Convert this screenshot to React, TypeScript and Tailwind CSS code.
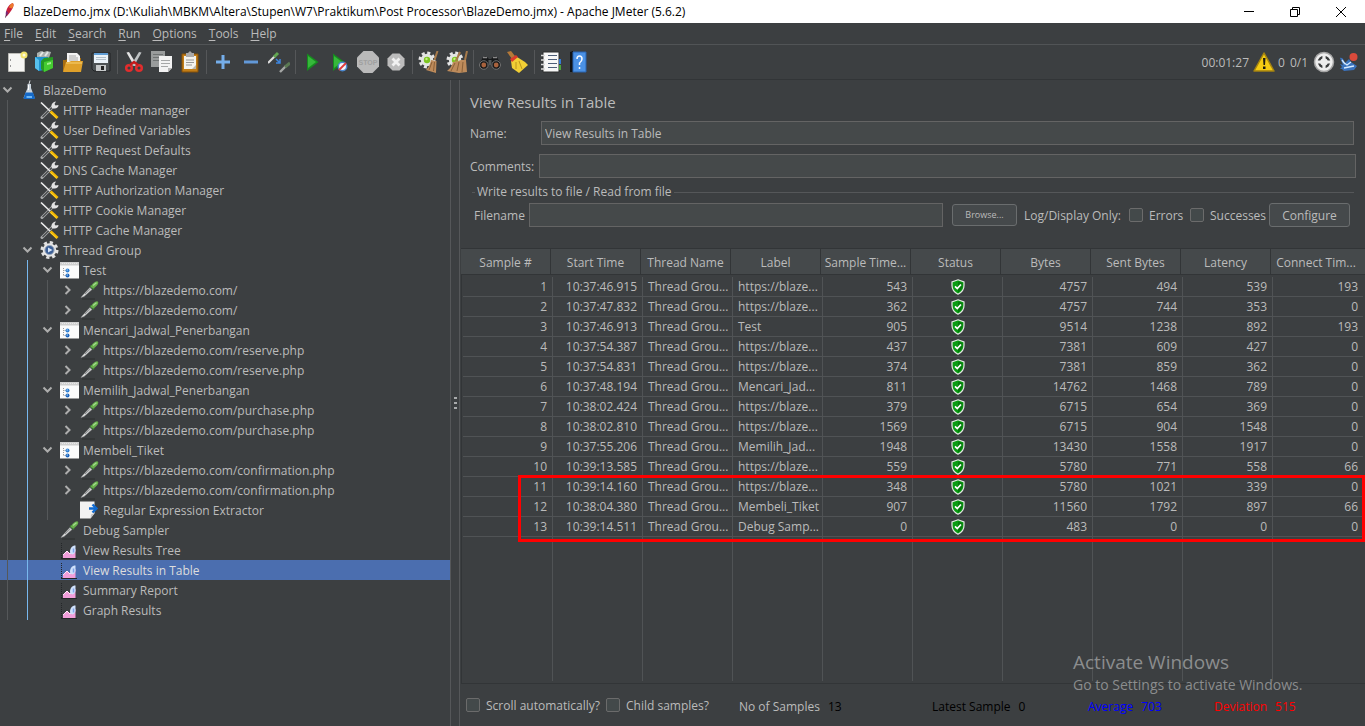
import React from "react";

type IconName =
  | "flask" | "tools" | "gear" | "controller" | "dropper" | "extractor" | "chart";

type Node = { label: string; icon: IconName; level: number; state?: "open" | "closed"; selected?: boolean };

const TREE: Node[] = [
  { label: "BlazeDemo", icon: "flask", level: 0, state: "open" },
  { label: "HTTP Header manager", icon: "tools", level: 1 },
  { label: "User Defined Variables", icon: "tools", level: 1 },
  { label: "HTTP Request Defaults", icon: "tools", level: 1 },
  { label: "DNS Cache Manager", icon: "tools", level: 1 },
  { label: "HTTP Authorization Manager", icon: "tools", level: 1 },
  { label: "HTTP Cookie Manager", icon: "tools", level: 1 },
  { label: "HTTP Cache Manager", icon: "tools", level: 1 },
  { label: "Thread Group", icon: "gear", level: 1, state: "open" },
  { label: "Test", icon: "controller", level: 2, state: "open" },
  { label: "https://blazedemo.com/", icon: "dropper", level: 3, state: "closed" },
  { label: "https://blazedemo.com/", icon: "dropper", level: 3, state: "closed" },
  { label: "Mencari_Jadwal_Penerbangan", icon: "controller", level: 2, state: "open" },
  { label: "https://blazedemo.com/reserve.php", icon: "dropper", level: 3, state: "closed" },
  { label: "https://blazedemo.com/reserve.php", icon: "dropper", level: 3, state: "closed" },
  { label: "Memilih_Jadwal_Penerbangan", icon: "controller", level: 2, state: "open" },
  { label: "https://blazedemo.com/purchase.php", icon: "dropper", level: 3, state: "closed" },
  { label: "https://blazedemo.com/purchase.php", icon: "dropper", level: 3, state: "closed" },
  { label: "Membeli_Tiket", icon: "controller", level: 2, state: "open" },
  { label: "https://blazedemo.com/confirmation.php", icon: "dropper", level: 3, state: "closed" },
  { label: "https://blazedemo.com/confirmation.php", icon: "dropper", level: 3, state: "closed" },
  { label: "Regular Expression Extractor", icon: "extractor", level: 3 },
  { label: "Debug Sampler", icon: "dropper", level: 2 },
  { label: "View Results Tree", icon: "chart", level: 2 },
  { label: "View Results in Table", icon: "chart", level: 2, selected: true },
  { label: "Summary Report", icon: "chart", level: 2 },
  { label: "Graph Results", icon: "chart", level: 2 },
];

const COLUMNS = [
  "Sample #", "Start Time", "Thread Name", "Label", "Sample Time...",
  "Status", "Bytes", "Sent Bytes", "Latency", "Connect Tim...",
];

const ROWS: [number, string, string, number, number, number, number, number][] = [
  [1, "10:37:46.915", "https://blaze...", 543, 4757, 494, 539, 193],
  [2, "10:37:47.832", "https://blaze...", 362, 4757, 744, 353, 0],
  [3, "10:37:46.913", "Test", 905, 9514, 1238, 892, 193],
  [4, "10:37:54.387", "https://blaze...", 437, 7381, 609, 427, 0],
  [5, "10:37:54.831", "https://blaze...", 374, 7381, 859, 362, 0],
  [6, "10:37:48.194", "Mencari_Jad...", 811, 14762, 1468, 789, 0],
  [7, "10:38:02.424", "https://blaze...", 379, 6715, 654, 369, 0],
  [8, "10:38:02.810", "https://blaze...", 1569, 6715, 904, 1548, 0],
  [9, "10:37:55.206", "Memilih_Jad...", 1948, 13430, 1558, 1917, 0],
  [10, "10:39:13.585", "https://blaze...", 559, 5780, 771, 558, 66],
  [11, "10:39:14.160", "https://blaze...", 348, 5780, 1021, 339, 0],
  [12, "10:38:04.380", "Membeli_Tiket", 907, 11560, 1792, 897, 66],
  [13, "10:39:14.511", "Debug Samp...", 0, 483, 0, 0, 0],
];

function Svg({ size, children }: { size: number; children: React.ReactNode }) {
  return (
    <svg width={size} height={size} viewBox={`0 0 ${size} ${size}`} className="block shrink-0" aria-hidden="true">
      {children}
    </svg>
  );
}

const TREE_ICONS: Record<IconName, React.ReactNode> = {
  flask: (
    <>
      <path d="M7.500 4h3.500v4l3.500 9.500q.3 1-.8 1H4.500q-1.200 0-.8-1L7.500 8z" fill="#c9d3dc" />
      <path d="M5.500 12.500h7.500l2 5.500q0 1-1 1H4.500q-1.200 0-.8-1z" fill="#1569c7" />
      <path d="M6.500 16h5.500v2H6.500z" fill="#6db6f5" />
      <path d="M8.500 5v5" stroke="#fff" />
      <path d="M9 4 10 0.500" stroke="#dfe3e6" />
    </>
  ),
  tools: (
    <>
      <path d="M2 17.500 13 6.500" stroke="#a9abac" strokeWidth="3" strokeLinecap="round" />
      <path d="M2.500 17 12 7.500" stroke="#45494a" strokeWidth="1.200" />
      <path d="M12 8c-1.500-3 .5-6 4-6.500L14.500 4l1 1.500 3-.5c0 3-3 4.500-6.500 3z" fill="#e4e4e4" />
      <path d="M1 2.500 10 11" stroke="#f0f0f0" strokeWidth="1.600" />
      <path d="M10.500 11.500 17.500 18" stroke="#f5b800" strokeWidth="3" />
      <path d="M10.500 12.500 16.500 18" stroke="#ffdc44" strokeWidth="0.800" />
    </>
  ),
  gear: (
    <>
      <circle cx="9.500" cy="10" r="7.600" fill="none" stroke="#e2e2e2" strokeWidth="2.800" strokeDasharray="3.200 2.770" />
      <circle cx="9.500" cy="10" r="6.800" fill="#e6e6e6" />
      <circle cx="9.500" cy="10" r="4.600" fill="#3c5f96" stroke="#9ba9bd" />
      <path d="M8 7.500 12.500 10 8 12.500z" fill="#d5e5fa" />
    </>
  ),
  controller: (
    <>
      <path d="M0 2h19v16.500H0z" fill="#fbfbfb" />
      <path d="M0 2h19v3.500H0z" fill="#cfcfcf" />
      <path d="M2 3.500h15" stroke="#e9e9e9" strokeDasharray="1 1" />
      <path d="M3.500 8v8M3.500 10.500H6M3.500 15.500H6" stroke="#999" strokeDasharray="1 1" fill="none" />
      <circle cx="7.500" cy="10.500" r="2" fill="#2f7fd3" />
      <circle cx="7.500" cy="15.500" r="2" fill="#1c64bc" />
      <path d="M6.500 10h1.500M6.500 15h1.500" stroke="#a7d3f7" />
    </>
  ),
  dropper: (
    <>
      <path d="M2 19h13" stroke="#2d3031" />
      <path d="M1 17.500 2.500 15.500 10 7.500 12 9.500 4 16.500z" fill="#dcdcdc" stroke="#8e9192" strokeWidth=".5" />
      <path d="M5 14 10.500 8.800" stroke="#75797a" strokeWidth=".8" />
      <path d="M10.300 5.500 14 9.200" stroke="#3d7a35" strokeWidth="2" />
      <path d="M10.800 7C11 5.500 14.500 1 17.300 1.300c2 .9 1 4-3.800 7.200z" fill="#68b04c" />
      <path d="M13 5.500 16.500 2.800" stroke="#a5dc91" strokeWidth="1.300" />
    </>
  ),
  extractor: (
    <>
      <path d="M0 1.500h14.500V13l-4 5.500H0z" fill="#f2f2f2" />
      <path d="m10.500 18.500.5-4 4-1.500z" fill="#c4c4c4" />
      <path d="M9 8.500h7M12.500 4.500l4 4-4 4" stroke="#0f69cf" strokeWidth="2.400" fill="none" />
    </>
  ),
  chart: (
    <>
      <path d="M1.500 3v15" stroke="#242628" strokeDasharray="1 1" />
      <path d="M1 18.500h16" stroke="#242628" />
      <path d="M3 18v-3l4-4 3 2.500L12.500 11 15.500 9v9z" fill="#f29fdb" />
      <path d="M3 15l4-4 3 3 2.500-2" stroke="#ffe5f8" fill="none" />
      <path d="M10 12c0-4 2-6.500 5.500-6.500V11c-.5 2-1.500 3-3 3.500-1.500-.5-2.500-1-2.500-2.500z" fill="#cfe0fb" />
      <path d="M13.500 8.500v4" stroke="#7fa4ea" strokeWidth="1.500" />
    </>
  ),
};

function Chevron({ open }: { open: boolean }) {
  return (
    <svg width="16" height="20" viewBox="0 0 16 20" className="block shrink-0" aria-hidden="true">
      <path
        d={open ? "M3.500 7.500 7.500 11.500 11.500 7.500" : "M5.500 6 9.500 10 5.500 14"}
        fill="none"
        stroke="#adadad"
        strokeWidth="2"
      />
    </svg>
  );
}

function TreeRow({ node }: { node: Node }) {
  return (
    <li
      role="treeitem"
      aria-level={node.level + 1}
      aria-selected={!!node.selected}
      className={node.selected ? "flex h-5 items-center bg-[#4b6eaf] text-[#dddddd]" : "flex h-5 items-center"}
    >
      {Array.from({ length: node.level }, (_, i) => (
        <span key={i} className="h-5 w-5 shrink-0 pl-[7px]">
          <span className={i === 1 ? "block h-5 w-px bg-[#78b8ee]" : "block h-5 w-px bg-[#55585a]"} />
        </span>
      ))}
      <span className="w-5 shrink-0">{node.state && <Chevron open={node.state === "open"} />}</span>
      <Svg size={20}>{TREE_ICONS[node.icon]}</Svg>
      <span className="whitespace-nowrap pl-[3px] pt-[2px]">{node.label}</span>
    </li>
  );
}

const gearShape = (
  <>
    <circle cx="9" cy="9" r="7" fill="none" stroke="#e5e5e5" strokeWidth="3" strokeDasharray="3 2.500" />
    <circle cx="9" cy="9" r="6.200" fill="#e2e4e2" />
    <circle cx="9" cy="9" r="3.200" fill="#7cc520" />
    <circle cx="8.500" cy="8" r="1.200" fill="#c5f080" />
  </>
);

const runTriangle = "M1 2.500 12.500 11 1 20z";

const TOOLBAR: { name: string; art: React.ReactNode }[][] = [
  [
    {
      name: "New",
      art: (
        <>
          <path d="M2.500 2.500h16v18h-16z" fill="#f6f6f4" stroke="#bdbdb8" />
          <path d="M4.500 8v2M4.500 14v2" stroke="#999" />
          <circle cx="18" cy="4" r="3.500" fill="#f2e36b" />
          <circle cx="18" cy="4" r="1.500" fill="#fffce0" />
        </>
      ),
    },
    {
      name: "Templates",
      art: (
        <>
          <path d="m3 2 4-2 3 1 3-1 4 1-2 6H3z" fill="#a9b0ae" />
          <path d="m6 5 3-4M11 5l3-4" stroke="#e3e6e5" strokeWidth="2" />
          <path d="M1 6h13v12l-9 2-4-3z" fill="#2092cf" />
          <path d="M1 6 5 9v11l-4-3z" fill="#57c0ed" />
          <path d="M7 10 10 7l9-1v11l-9 4-3-3z" fill="#269b22" />
          <path d="m10 11 9-2v8l-9 4z" fill="#45cc31" />
          <path d="m13 12 4-1v2l-4 1z" fill="#a4ef8f" />
        </>
      ),
    },
    {
      name: "Open",
      art: (
        <>
          <path d="M1 9h3l2-2h13v13H1z" fill="#a96e10" />
          <path d="M5 2h10l3 3v9H5z" fill="#f3f3f3" />
          <path d="M7 5h7M7 7h9M7 9h9" stroke="#a9a9a9" />
          <path d="M4 11h3l2-1h12l-2 11H1z" fill="#dfa02a" />
          <path d="M4 12h16" stroke="#f8d274" />
        </>
      ),
    },
    {
      name: "Save",
      art: (
        <>
          <path d="M2 2h18v18H4l-2-2z" fill="#4e5355" stroke="#202325" />
          <path d="M4 2h14v10H4z" fill="#eaf2f8" />
          <path d="M4 2h14v2H4z" fill="#5f9dd5" />
          <path d="M6 6.500h10M6 8.500h10" stroke="#b2bfc9" />
          <path d="M6 14h10v6H6z" fill="#c7cacb" />
          <path d="M11 15h3v4h-3z" fill="#222" />
        </>
      ),
    },
  ],
  [
    {
      name: "Cut",
      art: (
        <>
          <path d="M3.500 1.500 6 1l8 13-3 1z" fill="#e3e3e3" />
          <path d="M18.500 1.500 16 1 8 14l3 1z" fill="#bfc3c4" />
          <ellipse cx="6" cy="17" rx="2.800" ry="2.800" fill="none" stroke="#e12d2d" strokeWidth="2.500" />
          <ellipse cx="16" cy="17" rx="2.800" ry="2.800" fill="none" stroke="#e12d2d" strokeWidth="2.500" />
          <path d="m7 14 4-3 4 3" fill="none" stroke="#c51b1b" strokeWidth="2.500" />
        </>
      ),
    },
    {
      name: "Copy",
      art: (
        <>
          <path d="M0 0h14v16H0z" fill="#999c9c" />
          <path d="M2 3.500h10M2 6.500h10M2 9.500h10" stroke="#6f7373" />
          <path d="M8 5h13v12l-4 4H8z" fill="#f2f2f2" />
          <path d="M10 9.500h9M10 12.500h9M10 15.500h7" stroke="#a5a7a7" />
          <path d="m17 21 0-4 4 0z" fill="#b5b5b5" />
        </>
      ),
    },
    {
      name: "Paste",
      art: (
        <>
          <path d="M3 3h16v18H3z" fill="#c27e18" stroke="#855109" />
          <path d="M5 5h12v13H5z" fill="#f4f3ee" />
          <path d="M7 9h8M7 11.500h8M7 14h6" stroke="#989898" />
          <path d="M7 2h2l2-2 2 2h2v4H7z" fill="#aaa" />
          <path d="m13 18 4-4v4z" fill="#b9b7af" />
        </>
      ),
    },
  ],
  [
    { name: "Expand All", art: <path d="M4 11h14M11 4v14" stroke="#75aeea" strokeWidth="3" /> },
    { name: "Collapse All", art: <path d="M4 11h14" stroke="#6299d8" strokeWidth="3" /> },
    {
      name: "Toggle",
      art: (
        <>
          <path d="m0 12 7-7" stroke="#dedede" strokeWidth="2.200" />
          <path d="m6 6 4-4" stroke="#62a653" strokeWidth="3" />
          <path d="m8 8 4 4m0-4v4H8" stroke="#3d86df" strokeWidth="1.500" fill="none" />
          <path d="m12 21 6-6" stroke="#a4a7a5" strokeWidth="2.400" />
          <path d="m17 16 5-4" stroke="#5b7954" strokeWidth="3" />
        </>
      ),
    },
  ],
  [
    {
      name: "Start",
      art: (
        <g transform="translate(5 0)">
          <path d={runTriangle} fill="#168b1f" />
          <path d="M2 5v12l8-6z" fill="#36b83b" />
        </g>
      ),
    },
    {
      name: "Start no pauses",
      art: (
        <>
          <g transform="translate(3 0)">
            <path d={runTriangle} fill="#168b1f" />
            <path d="M2 5v12l8-6z" fill="#36b83b" />
          </g>
          <circle cx="13.500" cy="15.500" r="4.200" fill="#f4f5fa" stroke="#4a88cf" strokeWidth="1.500" />
          <path d="m10 19 7-7" stroke="#df3a3a" strokeWidth="1.800" />
        </>
      ),
    },
    {
      name: "Stop",
      art: (
        <>
          <path d="M6.500 0h9L22 6.500v9L15.500 22h-9L0 15.500v-9z" fill="#bababa" />
          <text x="11" y="14" textAnchor="middle" fill="#a0a0a0" className="font-['Liberation_Sans'] text-[7px] font-bold">STOP</text>
        </>
      ),
    },
    {
      name: "Shutdown",
      art: (
        <>
          <path d="M7.500 2.500h7l5 5v7l-5 5h-7l-5-5v-7z" fill="#bcbcbc" />
          <path d="m7.500 7.500 7 7m0-7-7 7" stroke="#f1f1f1" strokeWidth="2.800" />
        </>
      ),
    },
  ],
  [
    {
      name: "Clear",
      art: (
        <>
          {gearShape}
          <path d="m19.500 0-3 9" stroke="#a77a4a" strokeWidth="2" />
          <path d="m13 9 5.500 1-.5 12-10-3q4-4 5-10z" fill="#bd8b5b" />
          <path d="m14 11-3 8M16.500 11l-1 9" stroke="#8a6038" />
        </>
      ),
    },
    {
      name: "Clear All",
      art: (
        <>
          {gearShape}
          <path d="m14 1-4 9M21 0l-2 9" stroke="#a77a4a" strokeWidth="2" />
          <path d="m7 11 5-1 3-1h5l1 12-8 1-12-2q5-4 6-9z" fill="#bd8b5b" />
          <path d="m9 12-4 8M13 11l-2 9M17 11l-1 10" stroke="#8a6038" />
        </>
      ),
    },
  ],
  [
    {
      name: "Search",
      art: (
        <>
          <path d="M3 8q1-3 4-3l3 3h2l3-3q3 0 4 3l3 6H0z" fill="#181a1b" />
          <path d="M4 6.500h4M14 6.500h4" stroke="#8a8a8a" strokeWidth="1.500" />
          <circle cx="4.800" cy="14" r="4.300" fill="#191919" stroke="#737373" />
          <circle cx="17.200" cy="14" r="4.300" fill="#191919" stroke="#737373" />
          <circle cx="4.800" cy="14" r="2.400" fill="#a8623d" />
          <circle cx="17.200" cy="14" r="2.400" fill="#a8623d" />
          <path d="M9.500 9h3v5h-3z" fill="#55595a" />
        </>
      ),
    },
    {
      name: "Reset Search",
      art: (
        <>
          <path d="m0 1 4-1 4 5-3 3z" fill="#b47938" />
          <path d="m4 10 6-4 8 5 3 3-9 8-7-5z" fill="#f1cf35" />
          <path d="m3 8 6-4 2 2-6 5z" fill="#db3b2c" />
          <path d="m9 11 0 7M12 10l3 8" stroke="#ba941c" />
        </>
      ),
    },
  ],
  [
    {
      name: "Function Helper",
      art: (
        <>
          <path d="M3 1h16v20H3z" fill="#f7f7f7" stroke="#2c2e2f" />
          <path d="M1 4.500h4M1 9h4M1 13.500h4M1 18h4" stroke="#dadada" strokeWidth="1.500" />
          <path d="M8 4.500h9M8 8.500h9M8 12.500h9M8 16.500h9" stroke="#4d5e77" />
          <path d="M19 8h2v5h-2z" fill="#347bd5" />
          <path d="M19 14h2v5h-2z" fill="#4ca43d" />
        </>
      ),
    },
    {
      name: "Help",
      art: (
        <>
          <path d="m2 1 3-1v21l-3 0z" fill="#101214" />
          <path d="M5 1h13v20H5z" fill="#4b91e4" stroke="#2a65b1" />
          <path d="M9 8q0-3 2.500-3T14 8q0 2-2.500 4v2M11.500 16v2" stroke="#f5f9ff" strokeWidth="1.500" fill="none" />
        </>
      ),
    },
  ],
];

function TitleBar() {
  return (
    <header className="flex h-[23px] shrink-0 items-center bg-white pr-px text-black">
      <svg width="23" height="23" viewBox="0 0 23 23" aria-hidden="true">
        <path d="M6 16C5.500 10 8 5 12.500 3c2 1 1.500 5-5.500 13z" fill="#c8203c" />
        <path d="M9 7.500C10 5 11 3.700 12.500 3c1.500.8 1.500 3-.5 5.500z" fill="#ee7b2c" />
        <path d="M6 16c-.5-2-.3-4 .5-5.500l2 3z" fill="#7c2877" />
        <path d="m5.500 17.500 1-3" stroke="#5b254a" />
      </svg>
      <h1 className="flex-1 whitespace-nowrap">
        BlazeDemo.jmx (D:\Kuliah\MBKM\Altera\Stupen\W7\Praktikum\Post Processor\BlazeDemo.jmx) - Apache JMeter (5.6.2)
      </h1>
      <div className="flex">
        <button aria-label="Minimize" className="flex h-[23px] w-[46px] items-center justify-center">
          <Svg size={12}><path d="M1 5.500h10" stroke="#000" /></Svg>
        </button>
        <button aria-label="Restore" className="flex h-[23px] w-[46px] items-center justify-center">
          <Svg size={12}><path d="M1.500 3.500h7v7h-7zM3.500 3.500v-2h7v7h-2" stroke="#000" fill="none" /></Svg>
        </button>
        <button aria-label="Close" className="flex h-[23px] w-[46px] items-center justify-center">
          <Svg size={12}><path d="m1 1 10 10M11 1 1 11" stroke="#000" /></Svg>
        </button>
      </div>
    </header>
  );
}

function Toolbar() {
  return (
    <div role="toolbar" className="flex h-[35px] shrink-0 items-center border-b border-[#323537] pl-[3px] pr-[6px]">
      {TOOLBAR.map((group, g) => (
        <React.Fragment key={g}>
          {g > 0 && <span className="flex w-[5px] shrink-0 justify-center"><span className="h-6 w-px bg-[#555759]" /></span>}
          {group.map((tool) => (
            <button key={tool.name} aria-label={tool.name} className="flex h-7 w-7 shrink-0 items-center justify-center">
              <Svg size={22}>{tool.art}</Svg>
            </button>
          ))}
        </React.Fragment>
      ))}
      <div className="ml-auto flex items-center">
        <span className="pr-1 pt-[2px]">00:01:27</span>
        <button aria-label="Show log" className="flex items-center gap-[3px]">
          <Svg size={22}>
            <path d="M11 2 21 20H1z" fill="#f4cb13" stroke="#a58410" strokeWidth="1.500" strokeLinejoin="round" />
            <path d="M10 7h2.500L12 14h-1.500zM10 15.500h2.500V18H10z" fill="#1c1b12" />
          </Svg>
          <span className="pt-[2px]">0</span>
        </button>
        <span className="px-[5px] pt-[2px]">0/1</span>
        <Svg size={22}>
          <circle cx="11" cy="11" r="9.500" fill="#eeeeee" stroke="#a6a6a6" strokeWidth="1.500" />
          <circle cx="11" cy="11" r="5" fill="none" stroke="#393b3c" strokeWidth="2.400" />
          <path d="M11 4v14M4 11h14" stroke="#ededed" strokeWidth="3.200" />
        </Svg>
        <span className="pl-1">
          <Svg size={20}>
            <path d="M1 6c3-1 4 3 5 5l4-4 2 3 6 4-3 4-10 1-2-2H1l2-2-2-3 3 1z" fill="#3a72bd" />
            <path d="m4 10 4 3 4-3M5 16l10-2M3 8l3 4" stroke="#d6eaff" strokeWidth="1.300" fill="none" />
            <circle cx="14.500" cy="5" r="4" fill="#db4a3b" />
          </Svg>
        </span>
      </div>
    </div>
  );
}

function CheckField({ id, label }: { id: string; label: string }) {
  return (
    <span className="flex items-center gap-[6px]">
      <input
        id={id}
        type="checkbox"
        className="h-[14px] w-[14px] shrink-0 appearance-none rounded-[2px] border border-[#6b6b6b] bg-[#43494a] checked:bg-[#4b6eaf]"
      />
      <label htmlFor={id} className="whitespace-nowrap pt-[2px]">{label}</label>
    </span>
  );
}

const FIELD = "h-6 min-w-0 flex-1 border border-[#646464] bg-[#45494a] px-[3px] pt-px text-[#bbbbbb] outline-none";
const CELL = "flex items-center overflow-hidden whitespace-nowrap border-b border-r border-[#505355]";

function Shield() {
  return (
    <svg width="16" height="16" viewBox="0 0 16 16" role="img" aria-label="Success">
      <path d="M8 .8 14 3v3.500c0 4-2.500 7-6 8.700C4.500 13.500 2 10.500 2 6.500V3z" fill="#0a9c12" stroke="#e4e8e4" strokeWidth="1.200" />
      <path d="M8 2.500v11c2.500-1.500 4.500-4 4.500-7V4z" fill="#067a0d" />
      <path d="m5 7.300 2.300 2.300L11 5.500" stroke="#fff" strokeWidth="1.700" fill="none" />
    </svg>
  );
}

function ResultsTable() {
  return (
    <div className="relative ml-px flex min-h-0 flex-1 flex-col border-y border-[#323537]">
      <table className="flex min-h-0 flex-1 flex-col">
        <thead className="block border-b border-[#323537] bg-[#45494b] pr-1">
          <tr className="grid grid-cols-10">
            {COLUMNS.map((c) => (
              <th key={c} className="flex h-[25px] items-center justify-center overflow-hidden whitespace-nowrap border-r border-[#323537] pt-[2px] font-normal last:border-r-0">
                {c}
              </th>
            ))}
          </tr>
        </thead>
        <tbody className="flex min-h-0 flex-1 flex-col border-l border-[#323537] pb-[2px] pl-px pr-[2px] pt-[2px]">
          {ROWS.map(([n, time, label, elapsed, bytes, sent, latency, connect]) => (
            <tr key={n} className="grid h-5 shrink-0 grid-cols-10">
              <td className={`${CELL} justify-end pr-[5px]`}>{n}</td>
              <td className={`${CELL} justify-end pr-[5px]`}>{time}</td>
              <td className={`${CELL} pl-[5px]`}>Thread Grou...</td>
              <td className={`${CELL} pl-[5px]`}>{label}</td>
              <td className={`${CELL} justify-end pr-[5px]`}>{elapsed}</td>
              <td className={`${CELL} justify-center`}><Shield /></td>
              <td className={`${CELL} justify-end pr-[5px]`}>{bytes}</td>
              <td className={`${CELL} justify-end pr-[5px]`}>{sent}</td>
              <td className={`${CELL} justify-end pr-[5px]`}>{latency}</td>
              <td className={`${CELL} justify-end border-r-0 pr-[5px]`}>{connect}</td>
            </tr>
          ))}
          <tr className="grid min-h-0 flex-1 grid-cols-10" aria-hidden="true">
            {COLUMNS.map((c) => (
              <td key={c} className="border-r border-[#505355] last:border-r-0" />
            ))}
          </tr>
        </tbody>
      </table>
      <div className="pointer-events-none absolute left-[57px] right-0 top-[226px] h-[67px] border-[3px] border-[#ff0000]" />
    </div>
  );
}

function Stat({ label, value, className }: { label: string; value: string; className: string }) {
  return (
    <span className={`flex gap-2 whitespace-nowrap pt-1 ${className}`}>
      <span>{label}</span>
      <output className={label === "No of Samples" ? "text-black" : ""}>{value}</output>
    </span>
  );
}

export default function App() {
  return (
    <div className="relative flex h-screen flex-col overflow-hidden bg-[#3c3f41] font-['Open_Sans','Noto_Sans',sans-serif] text-[12px] leading-4 text-[#bbbbbb]">
      <TitleBar />
      <nav className="flex h-[22px] shrink-0 items-center gap-3 border-b border-[#515456] pl-1">
        {["File", "Edit", "Search", "Run", "Options", "Tools", "Help"].map((m) => (
          <button key={m}>
            <span className="underline underline-offset-2">{m[0]}</span>
            {m.slice(1)}
          </button>
        ))}
      </nav>
      <Toolbar />
      <div className="flex min-h-0 flex-1">
        <aside className="w-[451px] shrink-0 border-r border-[#555759]">
          <ul role="tree">
            {TREE.map((n, i) => <TreeRow key={i} node={n} />)}
          </ul>
        </aside>
        <div role="separator" className="flex w-[9px] shrink-0 items-center justify-center border-r border-[#555759]">
          <svg width="5" height="14" viewBox="0 0 5 14" aria-hidden="true">
            <path d="M1 1h3v2H1zM1 6h3v2H1zM1 11h3v2H1z" fill="#a9abac" />
          </svg>
        </div>
        <main className="flex min-w-0 flex-1 flex-col">
          <h2 className="pl-[10px] pt-3 text-[15px] leading-5">View Results in Table</h2>
          <div className="mt-[9px] flex items-center pl-[10px] pr-[11px]">
            <label htmlFor="name" className="w-[71px] pt-[2px]">Name:</label>
            <input id="name" defaultValue="View Results in Table" className={FIELD} />
          </div>
          <div className="mt-[9px] flex items-center pl-[10px] pr-[9px]">
            <label htmlFor="comments" className="w-[69px] pt-[2px]">Comments:</label>
            <input id="comments" className={FIELD} />
          </div>
          <section className="pl-3 pr-[11px] pt-[6px]">
            <h3 className="flex items-center gap-[2px]">
              <span className="h-px w-[3px] bg-[#555759]" />
              Write results to file / Read from file
              <span className="h-px flex-1 bg-[#555759]" />
            </h3>
            <div className="mt-[3px] flex items-center pl-[2px] pr-1">
              <label htmlFor="filename" className="w-[55px] pt-[2px]">Filename</label>
              <input id="filename" className={FIELD} />
              <button className="ml-[9px] h-[22px] w-[65px] rounded-[3px] border border-[#6a6d6e] bg-[#45494b] text-[9px]">Browse...</button>
              <span className="ml-[7px] w-[105px] whitespace-nowrap pt-[2px]">Log/Display Only:</span>
              <span className="flex w-[61px]"><CheckField id="errors" label="Errors" /></span>
              <span className="flex w-[79px]"><CheckField id="successes" label="Successes" /></span>
              <button className="h-6 w-[81px] rounded-[3px] border border-[#6a6d6e] bg-[#45494b] pt-px">Configure</button>
            </div>
          </section>
          <div className="h-[21px] shrink-0" />
          <ResultsTable />
          <footer className="flex h-[42px] shrink-0 items-center pl-[6px]">
            <span className="flex w-[140px]"><CheckField id="scroll" label="Scroll automatically?" /></span>
            <span className="flex w-[133px]"><CheckField id="child" label="Child samples?" /></span>
            <Stat label="No of Samples" value="13" className="w-[193px]" />
            <Stat label="Latest Sample" value="0" className="w-[156px] text-black" />
            <Stat label="Average" value="703" className="w-[126px] text-[#0000ff]" />
            <Stat label="Deviation" value="515" className="text-[#ff0000]" />
          </footer>
        </main>
      </div>
      <div className="pointer-events-none absolute bottom-[31px] right-[56px] w-[236px] whitespace-nowrap text-[#8b8d8e]">
        <p className="text-[19px] leading-[26px]">Activate Windows</p>
        <p className="text-[14px] leading-5">Go to Settings to activate Windows.</p>
      </div>
    </div>
  );
}
